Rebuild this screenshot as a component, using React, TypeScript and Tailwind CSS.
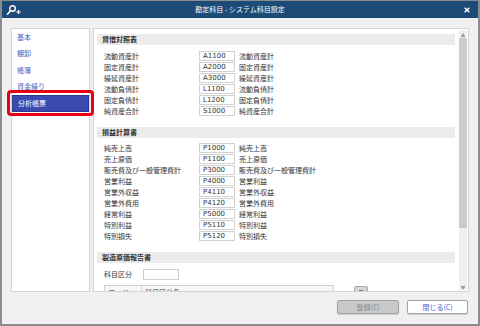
import React from "react";

const bs = [
  ["流動資産計", "A1100", "流動資産計"],
  ["固定資産計", "A2000", "固定資産計"],
  ["繰延資産計", "A3000", "繰延資産計"],
  ["流動負債計", "L1100", "流動負債計"],
  ["固定負債計", "L1200", "固定負債計"],
  ["純資産合計", "S1000", "純資産合計"],
];
const pl = [
  ["純売上高", "P1000", "純売上高"],
  ["売上原価", "P1100", "売上原価"],
  ["販売費及び一般管理費計", "P3000", "販売費及び一般管理費計"],
  ["営業利益", "P4000", "営業利益"],
  ["営業外収益", "P4110", "営業外収益"],
  ["営業外費用", "P4120", "営業外費用"],
  ["経常利益", "P5000", "経常利益"],
  ["特別利益", "P5110", "特別利益"],
  ["特別損失", "P5120", "特別損失"],
];
const menu = ["基本", "棚卸", "帳簿", "資金繰り", "分析帳票"];

function Header({ title }: { title: string }) {
  return (
    <div className="h-[11px] bg-[#ebebeb] pl-[5px] flex items-center text-[7px] font-bold text-[#333] leading-none">
      {title}
    </div>
  );
}

function Rows({ rows }: { rows: string[][] }) {
  return (
    <div className="pl-[7px]">
      {rows.map(([a, code, b]) => (
        <div key={code} className="h-[11px] flex items-start">
          <div className="w-[95px] h-[10px] flex items-center text-[7px] leading-none text-[#333]">{a}</div>
          <div className="w-[36px] h-[10px] border border-[#d0d0d0] flex items-center pl-[3px] font-['DejaVu_Sans',sans-serif] text-[7px] leading-none text-[#333]">
            {code}
          </div>
          <div className="h-[10px] ml-[4px] flex items-center text-[7px] leading-none text-[#333]">{b}</div>
        </div>
      ))}
    </div>
  );
}

export default function App() {
  return (
    <div className="w-[480px] h-[326px] bg-[#f0f0f0] border-x-2 border-b-2 border-t border-[#8c8c8c] flex flex-col overflow-hidden font-['Noto_Sans_CJK_JP',sans-serif]">
      <div className="h-[17px] bg-[#1d4b77] relative flex items-center justify-center text-white text-[7px] leading-none shrink-0">
        <svg className="absolute left-[4px] top-[3px]" width="16" height="12" viewBox="0 0 16 12">
          <circle cx="6.5" cy="4.5" r="2.8" fill="none" stroke="white" strokeWidth="1.4" />
          <line x1="4.6" y1="6.6" x2="1.5" y2="10.2" stroke="white" strokeWidth="1.6" strokeLinecap="round" />
          <line x1="10.5" y1="8" x2="14.5" y2="8" stroke="white" strokeWidth="1.2" />
          <line x1="12.5" y1="6" x2="12.5" y2="10" stroke="white" strokeWidth="1.2" />
        </svg>
        <span>勘定科目 - システム科目設定</span>
        <svg className="absolute right-[8px] top-[6px]" width="6" height="6" viewBox="0 0 6 6">
          <line x1="0.7" y1="0.7" x2="5.3" y2="5.3" stroke="white" strokeWidth="1.5" />
          <line x1="5.3" y1="0.7" x2="0.7" y2="5.3" stroke="white" strokeWidth="1.5" />
        </svg>
      </div>

      <div className="flex-1 flex flex-col px-[9px] pt-[10px]">
        <div className="flex h-[264px] gap-[3px] shrink-0">
          <div className="w-[79px] bg-white border border-[#d4d4d4] relative">
            {menu.map((m, i) => (
              <div
                key={m}
                className={
                  i === 4
                    ? "h-[16.5px] flex items-center pl-[5px] text-[7px] leading-none text-white bg-[#3a4bb0] border border-[#2c3a92]"
                    : "h-[16.5px] flex items-center pl-[5px] text-[7px] leading-none text-[#3f5fc0]"
                }
              >
                {m}
              </div>
            ))}
            <div className="absolute left-[-5px] top-[61px] w-[87px] h-[26px] border-[3px] border-[#e60012] rounded-[4px] pointer-events-none" />
          </div>

          <div className="flex-1 bg-white border border-[#d4d4d4] flex overflow-hidden">
            <div className="w-[358px] ml-[3px] pt-[5px] h-full overflow-hidden">
              <Header title="貸借対照表" />
              <div className="h-[6px]" />
              <Rows rows={bs} />
              <div className="h-[10px]" />
              <Header title="損益計算書" />
              <div className="h-[5px]" />
              <Rows rows={pl} />
              <div className="h-[10px]" />
              <Header title="製造原価報告書" />
              <div className="h-[6px]" />
              <div className="h-[11px] flex items-center pl-[7px]">
                <div className="w-[39px] text-[7px] leading-none text-[#333]">科目区分</div>
                <div className="w-[36px] h-[11px] border border-[#d0d0d0]" />
              </div>
              <div className="h-[5px]" />
              <div className="flex items-start pl-[7px]">
                <div className="w-[230px] h-[14px] border border-[#d0d0d0] bg-[#f7f7f7] flex text-[7px] leading-none text-[#333]">
                  <div className="w-[37px] pl-[3px] pt-[3px] border-r border-[#d8d8d8]">コード</div>
                  <div className="pl-[3px] pt-[3px]">科目区分名</div>
                </div>
                <div className="ml-[20px] mt-[1px] w-[14px] h-[12px] bg-[#d6d6d6] border border-[#a8a8a8] rounded-[2px] flex justify-center pt-[1px] text-[5px] leading-none text-[#777]">
                  ▼
                </div>
              </div>
            </div>
            <div className="ml-auto mr-[1px] my-[1px] w-[8px] flex flex-col bg-[#f0f0f0]">
              <div className="h-[8px] flex items-center justify-center text-[5px] leading-none text-[#999]">▲</div>
              <div className="h-[190px] bg-[#cbcbcb]" />
              <div className="flex-1" />
              <div className="h-[8px] flex items-center justify-center text-[5px] leading-none text-[#999]">▼</div>
            </div>
          </div>
        </div>

        <div className="flex justify-end gap-[8px] mt-[8px] pr-[1px]">
          <div className="w-[62px] h-[14px] bg-[#c9c9c9] border border-[#a4a4a4] rounded-[2px] flex items-center justify-center text-[7px] leading-none text-[#8a8a8a] shadow-[0_1px_1px_rgba(0,0,0,0.15)]">
            登録(E)
          </div>
          <div className="w-[61px] h-[14px] bg-white border border-[#a4a4a4] rounded-[2px] flex items-center justify-center text-[7px] leading-none text-[#3a63d8] shadow-[0_1px_1px_rgba(0,0,0,0.15)]">
            閉じる(C)
          </div>
        </div>
      </div>
    </div>
  );
}
